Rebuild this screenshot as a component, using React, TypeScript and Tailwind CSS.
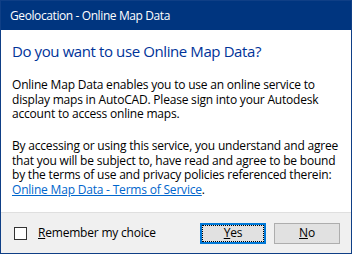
import React from "react";

export default function App() {
  const font = { fontFamily: '"Segoe UI", "Open Sans", "Noto Sans", sans-serif' };
  return (
    <div
      className="w-[352px] h-[254px] border border-[#0f3f86] flex flex-col bg-white text-[12px] text-black overflow-hidden"
      style={font}
    >
      <div className="h-[29px] shrink-0 bg-[#00357f] text-white flex items-center pl-[9px] leading-none tracking-[-0.4px]">
        Geolocation - Online Map Data
      </div>
      <div className="flex-1 px-[11px] pt-[11px] whitespace-nowrap">
        <div className="text-[15px] leading-[21px] text-[#003399] tracking-[-0.4px]">
          Do you want to use Online Map Data?
        </div>
        <p className="mt-[16px] leading-[14.5px] tracking-[-0.2px]">
          Online Map Data enables you to use an online service to
          <br />
          display maps in AutoCAD. Please sign into your Autodesk
          <br />
          account to access online maps.
        </p>
        <p className="mt-[17.5px] leading-[14.5px] tracking-[-0.2px]">
          By accessing or using this service, you understand and agree
          <br />
          that you will be subject to, have read and agree to be bound
          <br />
          by the terms of use and privacy policies referenced therein:
          <br />
          <span className="text-[#0066cc] underline">Online Map Data - Terms of Service</span>.
        </p>
      </div>
      <div className="h-[41px] shrink-0 border-t border-[#dfdfdf] bg-[#f0f0f0] flex items-center pl-[13px] pr-[11px] tracking-[-0.2px]">
        <div className="w-[13px] h-[13px] border border-[#333333] bg-white" />
        <span className="ml-[11px]">
          <u>R</u>emember my choice
        </span>
        <div className="flex-1" />
        <button className="relative w-[66px] h-[21px] border-2 border-[#0078d7] bg-[#e1e1e1] text-[12px] leading-none flex items-center justify-center">
          <span className="absolute inset-0 border border-dotted border-black" />
          <span>
            <u>Y</u>es
          </span>
        </button>
        <button className="ml-[8px] w-[66px] h-[21px] border border-[#adadad] bg-[#e1e1e1] text-[12px] leading-none flex items-center justify-center">
          <span>
            <u>N</u>o
          </span>
        </button>
      </div>
    </div>
  );
}
